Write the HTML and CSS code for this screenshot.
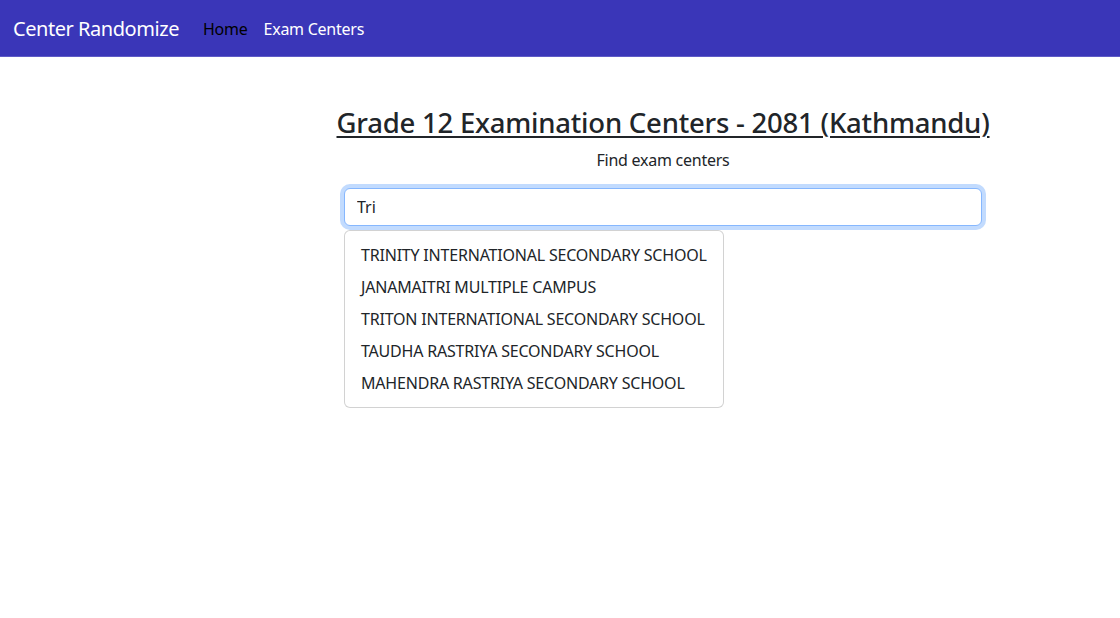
FILE: index.html
```html
<!DOCTYPE html>
<html lang="en">
<head>
<meta charset="utf-8">
<title>Center Randomize</title>
<link rel="stylesheet" href="styles.css">
</head>
<body>
<nav class="navbar">
  <a class="brand" href="#">Center Randomize</a>
  <ul class="nav">
    <li><a class="nav-link active" href="#">Home</a></li>
    <li><a class="nav-link" href="#">Exam Centers</a></li>
  </ul>
</nav>
<div class="layout">
  <div class="aside"></div>
  <main class="main">
    <h3 class="title"><a href="#">Grade 12 Examination Centers - 2081 (Kathmandu)</a></h3>
    <p class="subtitle">Find exam centers</p>
    <div class="search">
      <input class="form-control" type="text" value="Tri" autofocus>
      <ul class="dropdown">
        <li class="dropdown-item">TRINITY INTERNATIONAL SECONDARY SCHOOL</li>
        <li class="dropdown-item">JANAMAITRI MULTIPLE CAMPUS</li>
        <li class="dropdown-item">TRITON INTERNATIONAL SECONDARY SCHOOL</li>
        <li class="dropdown-item">TAUDHA RASTRIYA SECONDARY SCHOOL</li>
        <li class="dropdown-item">MAHENDRA RASTRIYA SECONDARY SCHOOL</li>
      </ul>
    </div>
  </main>
</div>
</body>
</html>
```

FILE: styles.css
```css
* { box-sizing: border-box; }
html, body { margin: 0; padding: 0; min-height: 100vh; }
body {
  font-family: "Noto Sans", "Open Sans", sans-serif;
  font-size: 16px;
  line-height: 1.5;
  letter-spacing: -0.25px;
  color: #212529;
  background: #fff;
}
.navbar {
  display: flex;
  align-items: center;
  height: 57px;
  padding: 1px 12px 0 13px;
  background: #3a36b8;
  border-bottom: 1px solid #5e5bc6;
}
.brand {
  font-size: 20px;
  letter-spacing: -0.45px;
  line-height: 30px;
  color: #fff;
  text-decoration: none;
  margin-right: 16px;
  padding: 5px 0;
}
.nav {
  display: flex;
  list-style: none;
  margin: 0;
  padding: 0;
}
.nav-link {
  display: block;
  padding: 8px 8px;
  color: #fff;
  text-decoration: none;
  font-size: 16px;
}
.nav-link.active { color: #000; }
.layout {
  display: flex;
  min-height: calc(100vh - 57px);
}
.aside { width: 332px; flex: none; }
.main {
  width: 662px;
  flex: none;
  padding: 0 12px;
  text-align: center;
}
.title {
  margin: 49px -40px 9px;
  font-size: 27.5px;
  letter-spacing: -0.22px;
  font-weight: 500;
  line-height: 1.2;
}
.title a { color: #212529; text-decoration: underline; text-underline-offset: 3px; text-decoration-thickness: 2px; }
.subtitle { margin: 0 0 16px; }
.search {
  position: relative;
  text-align: left;
}
.form-control {
  display: block;
  width: 100%;
  height: 38px;
  padding: 6px 12px;
  font: inherit;
  color: #212529;
  border: 1px solid #86b7fe;
  border-radius: 6px;
  outline: none;
  box-shadow: 0 0 0 4px rgba(13, 110, 253, 0.25);
}
.dropdown {
  position: absolute;
  top: 42px;
  left: 0;
  list-style: none;
  margin: 0;
  padding: 8px 0;
  background: #fff;
  border: 1px solid rgba(0, 0, 0, 0.175);
  border-radius: 6px;
  min-width: 160px;
}
.dropdown-item {
  padding: 4px 16px;
  white-space: nowrap;
  letter-spacing: -0.2px;
  color: #212529;
}
```
